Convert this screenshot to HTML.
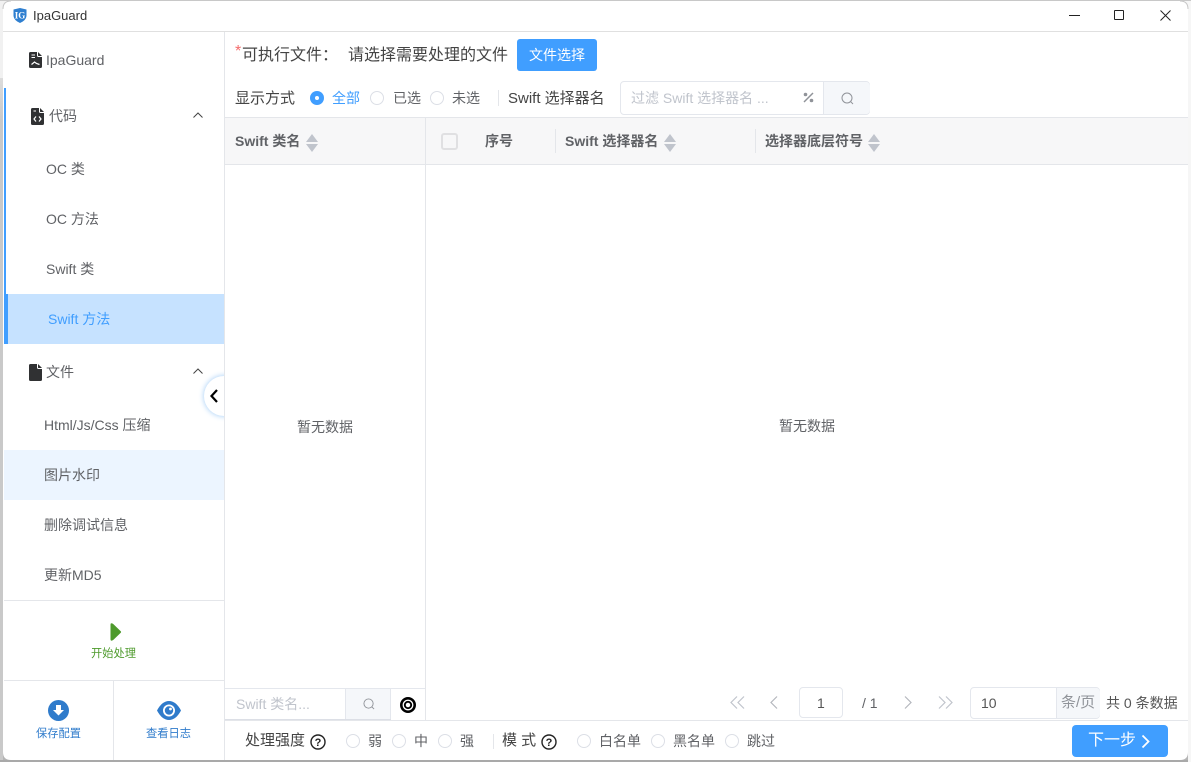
<!DOCTYPE html>
<html lang="zh">
<head>
<meta charset="utf-8">
<title>IpaGuard</title>
<style>
html,body{margin:0;padding:0;width:1191px;height:762px;overflow:hidden;background:#fff}
body{position:relative;font-family:"Liberation Sans","Noto Sans CJK SC",sans-serif;font-size:14px;color:#606266}
.a{position:absolute}
.t{position:absolute;white-space:nowrap;line-height:20px}
.ln{position:absolute;background:#e4e6ea}
.radio{position:absolute;width:12px;height:12px;border:1px solid #dcdfe6;border-radius:50%;background:#fff}
.th{font-weight:bold;color:#606266;font-size:14px}
svg{position:absolute;overflow:visible}
</style>
</head>
<body>
<!-- window frame -->
<div class="a" style="left:0;top:0;width:3px;height:762px;background:linear-gradient(#f1f1f1 0,#f1f1f1 78px,#dcdcdc 78px,#c9c9c9 120px,#c9c9c9 100%)"></div>
<div class="a" style="left:0;top:760px;width:1191px;height:2px;background:#a9a9a9"></div>
<div class="a" style="left:1188px;top:0;width:3px;height:762px;background:#f6f6f6"></div>
<div class="a" style="left:0;top:0;width:1191px;height:1px;background:#c8c8c8"></div>

<!-- title bar -->
<svg style="left:13px;top:8px" width="14" height="15" viewBox="0 0 14 15"><path d="M0.5 1.5 L7 0 L13.5 1.5 V8 Q13 12.5 7 15 Q1 12.5 0.5 8Z" fill="#2f7fd0"/><text x="7" y="10.5" font-size="9" font-weight="bold" fill="#fff" text-anchor="middle" font-family="Liberation Serif">IG</text></svg>
<div class="t" style="left:33px;top:6px;font-size:13px;color:#333;line-height:19px">IpaGuard</div>
<div class="ln" style="left:3px;top:31px;width:1185px;height:1px;background:#e0e0e0"></div>
<div class="a" style="left:1069px;top:15px;width:11px;height:1px;background:#222"></div>
<div class="a" style="left:1114px;top:10px;width:8px;height:8px;border:1.2px solid #222;border-radius:1px"></div>
<svg style="left:1160px;top:10px" width="11" height="11" viewBox="0 0 11 11"><path d="M0.5 0.5 L10.5 10.5 M10.5 0.5 L0.5 10.5" stroke="#222" stroke-width="1" fill="none"/></svg>

<!-- sidebar -->
<div class="ln" style="left:224px;top:32px;width:1px;height:728px"></div>
<div class="a" style="left:4px;top:88px;width:2px;height:206px;background:#409eff"></div>
<div class="a" style="left:4px;top:294px;width:220px;height:50px;background:#c6e2ff"></div>
<div class="a" style="left:4px;top:294px;width:4px;height:50px;background:#409eff"></div>
<div class="a" style="left:4px;top:450px;width:220px;height:50px;background:#ecf5ff"></div>

<svg style="left:29px;top:52px" width="13" height="16" viewBox="0 0 13 16"><path d="M1.5 0 H8 V3.5 Q8 5 9.5 5 H13 V14.5 Q13 16 11.5 16 H1.5 Q0 16 0 14.5 V1.5 Q0 0 1.5 0Z M9 0 L13 4 H9.5 Q9 4 9 3.5Z" fill="#303133"/><path d="M2.5 3 H6 M2.5 5.5 H6" stroke="#fff" stroke-width="1"/><path d="M2.5 12.5 L5.5 10 L7.5 11.5 L10.5 12.5" stroke="#fff" stroke-width="1.2" fill="none"/></svg>
<div class="t" style="left:46px;top:50px">IpaGuard</div>

<svg style="left:31px;top:108px" width="13" height="17" viewBox="0 0 13 17"><path d="M1.5 0 H8 V3.5 Q8 5 9.5 5 H13 V15.5 Q13 17 11.5 17 H1.5 Q0 17 0 15.5 V1.5 Q0 0 1.5 0Z M9 0 L13 4 H9.5 Q9 4 9 3.5Z" fill="#303133"/><path d="M5 8.5 L3 11 L5 13.5 M8 8.5 L10 11 L8 13.5" stroke="#fff" stroke-width="1.2" fill="none"/><path d="M2.5 3 H5" stroke="#fff" stroke-width="1"/></svg>
<div class="t" style="left:49px;top:106px">代码</div>
<svg style="left:193px;top:112px" width="10" height="6" viewBox="0 0 10 6"><path d="M0.5 5.5 L5 1 L9.5 5.5" stroke="#444" stroke-width="1" fill="none"/></svg>

<div class="t" style="left:46px;top:159px">OC 类</div>
<div class="t" style="left:46px;top:209px">OC 方法</div>
<div class="t" style="left:46px;top:259px">Swift 类</div>
<div class="t" style="left:48px;top:309px;color:#409eff">Swift 方法</div>

<svg style="left:29px;top:364px" width="13" height="17" viewBox="0 0 13 17"><path d="M1.5 0 H8 V3.5 Q8 5 9.5 5 H13 V15.5 Q13 17 11.5 17 H1.5 Q0 17 0 15.5 V1.5 Q0 0 1.5 0Z M9 0 L13 4 H9.5 Q9 4 9 3.5Z" fill="#303133"/></svg>
<div class="t" style="left:46px;top:362px">文件</div>
<svg style="left:193px;top:368px" width="10" height="6" viewBox="0 0 10 6"><path d="M0.5 5.5 L5 1 L9.5 5.5" stroke="#444" stroke-width="1" fill="none"/></svg>

<div class="t" style="left:44px;top:415px">Html/Js/Css 压缩</div>
<div class="t" style="left:44px;top:465px">图片水印</div>
<div class="t" style="left:44px;top:515px">删除调试信息</div>
<div class="t" style="left:44px;top:565px">更新MD5</div>

<!-- collapse button -->
<div class="a" style="left:194px;top:366px;width:30px;height:60px;overflow:hidden"><div class="a" style="left:10px;top:10px;width:40px;height:40px;border-radius:50%;background:#fff;box-shadow:0 0 6px #9cc9f5"></div></div>
<svg style="left:210px;top:389px" width="8" height="14" viewBox="0 0 8 14"><path d="M7 1 L1.5 7 L7 13" stroke="#000" stroke-width="2.2" fill="none"/></svg>

<div class="ln" style="left:4px;top:600px;width:220px;height:1px"></div>
<svg style="left:110px;top:623px" width="12" height="18" viewBox="0 0 12 18"><path d="M1.5 0.3 Q0.5 0.3 0.5 1.5 V16.5 Q0.5 17.7 1.5 17.7 Q2.5 17.7 3.5 16.8 L10.5 10 Q11.7 9 10.5 8 L3.5 1.2 Q2.5 0.3 1.5 0.3Z" fill="#4e9a2c"/></svg>
<div class="t" style="left:91px;top:644px;font-size:11.25px;color:#4e9a2c">开始处理</div>

<div class="ln" style="left:4px;top:680px;width:220px;height:1px"></div>
<div class="ln" style="left:113px;top:681px;width:1px;height:79px"></div>
<svg style="left:48px;top:700px" width="21" height="21" viewBox="0 0 21 21"><circle cx="10.5" cy="10.5" r="10.5" fill="#2f7bcb"/><path d="M8 5 H13 V10 H16 L10.5 15.5 L5 10 H8Z" fill="#fff"/></svg>
<div class="t" style="left:36px;top:724px;font-size:11.25px;color:#2f7bcb">保存配置</div>
<svg style="left:157px;top:701px" width="24" height="19" viewBox="0 0 24 19"><path d="M0 9.5 Q5 0 12 0 Q19 0 24 9.5 Q19 19 12 19 Q5 19 0 9.5Z" fill="#2f7bcb"/><circle cx="12" cy="9.5" r="6" fill="#fff"/><circle cx="12" cy="9.5" r="4.2" fill="#2f7bcb"/><circle cx="13.5" cy="8" r="1.4" fill="#fff"/></svg>
<div class="t" style="left:146px;top:724px;font-size:11.25px;color:#2f7bcb">查看日志</div>

<!-- top row -->
<div class="t" style="left:235px;top:44px;color:#f56c6c;font-size:16px;line-height:16px">*</div>
<div class="t" style="left:242px;top:46px;color:#444;font-size:16px">可执行文件：</div>
<div class="t" style="left:348px;top:46px;color:#444;font-size:16px">请选择需要处理的文件</div>
<div class="a" style="left:517px;top:39px;width:80px;height:32px;background:#409eff;border-radius:3px"></div>
<div class="t" style="left:529px;top:45px;color:#fff;font-size:14px">文件选择</div>

<!-- filter row -->
<div class="t" style="left:235px;top:89px;color:#444;font-size:15px">显示方式</div>
<div class="a" style="left:310px;top:91px;width:14px;height:14px;border-radius:50%;background:#409eff"></div>
<div class="a" style="left:315px;top:96px;width:4px;height:4px;border-radius:50%;background:#fff"></div>
<div class="t" style="left:332px;top:88px;color:#409eff">全部</div>
<div class="radio" style="left:370px;top:91px"></div>
<div class="t" style="left:393px;top:88px">已选</div>
<div class="radio" style="left:430px;top:91px"></div>
<div class="t" style="left:452px;top:88px">未选</div>
<div class="ln" style="left:498px;top:90px;width:1px;height:16px"></div>
<div class="t" style="left:508px;top:89px;color:#444;font-size:15px">Swift 选择器名</div>

<div class="a" style="left:620px;top:81px;width:248px;height:32px;border:1px solid #e4e7ed;border-radius:4px;background:#fff"></div>
<div class="a" style="left:823px;top:82px;width:46px;height:32px;background:#f5f7fa;border-left:1px solid #e4e7ed;border-radius:0 4px 4px 0"></div>
<div class="t" style="left:631px;top:88px;color:#c0c4cc">过滤 Swift 选择器名 ...</div>
<svg style="left:803px;top:92px" width="11" height="11" viewBox="0 0 11 11"><path d="M1 10 L10 1" stroke="#909399" stroke-width="1.5"/><circle cx="2.5" cy="2.5" r="1.8" fill="#909399"/><circle cx="8.5" cy="8.5" r="1.8" fill="#909399"/></svg>
<svg style="left:841px;top:92px" width="13" height="13" viewBox="0 0 13 13"><circle cx="6" cy="6" r="5" stroke="#909399" stroke-width="1" fill="none"/><path d="M9.7 9.7 L12 12" stroke="#909399" stroke-width="1"/></svg>

<!-- table header -->
<div class="a" style="left:225px;top:118px;width:963px;height:46px;background:#f7f7f8"></div>
<div class="ln" style="left:225px;top:117px;width:963px;height:1px"></div>
<div class="ln" style="left:225px;top:164px;width:963px;height:1px"></div>
<div class="ln" style="left:425px;top:118px;width:1px;height:602px"></div>

<div class="t th" style="left:235px;top:131px">Swift 类名</div>
<svg style="left:306px;top:134px" width="12" height="18" viewBox="0 0 12 18"><path d="M6 0 L12 8 H0Z M6 18 L12 10 H0Z" fill="#c0c4cc"/></svg>
<div class="a" style="left:441px;top:133px;width:13px;height:13px;border:2px solid #e0e0e2;border-radius:3px;background:#f7f7f8"></div>
<div class="t th" style="left:485px;top:131px">序号</div>
<div class="ln" style="left:555px;top:129px;width:1px;height:24px"></div>
<div class="t th" style="left:565px;top:131px">Swift 选择器名</div>
<svg style="left:664px;top:134px" width="12" height="18" viewBox="0 0 12 18"><path d="M6 0 L12 8 H0Z M6 18 L12 10 H0Z" fill="#c0c4cc"/></svg>
<div class="ln" style="left:755px;top:129px;width:1px;height:24px"></div>
<div class="t th" style="left:765px;top:131px">选择器底层符号</div>
<svg style="left:868px;top:134px" width="12" height="18" viewBox="0 0 12 18"><path d="M6 0 L12 8 H0Z M6 18 L12 10 H0Z" fill="#c0c4cc"/></svg>

<div class="t" style="left:297px;top:417px;font-size:14px">暂无数据</div>
<div class="t" style="left:779px;top:416px;font-size:14px">暂无数据</div>

<!-- left search -->
<div class="a" style="left:225px;top:688px;width:200px;height:32px;border-top:1px solid #e4e7ed;box-sizing:border-box"></div>
<div class="a" style="left:225px;top:719px;width:166px;height:1px;background:#dcdfe6"></div>
<div class="a" style="left:345px;top:689px;width:46px;height:30px;background:#f5f7fa;border-left:1px solid #e4e7ed;border-right:1px solid #e4e7ed;box-sizing:border-box"></div>
<div class="t" style="left:236px;top:694px;color:#c0c4cc">Swift 类名...</div>
<svg style="left:363px;top:698px" width="12" height="12" viewBox="0 0 13 13"><circle cx="6" cy="6" r="5" stroke="#909399" stroke-width="1" fill="none"/><path d="M9.7 9.7 L12 12" stroke="#909399" stroke-width="1"/></svg>
<svg style="left:400px;top:697px" width="16" height="16" viewBox="0 0 16 16"><circle cx="8" cy="8" r="6.7" stroke="#000" stroke-width="2.6" fill="none"/><circle cx="8" cy="8" r="3.2" stroke="#000" stroke-width="1.9" fill="none"/></svg>

<!-- pagination -->
<svg style="left:730px;top:696px" width="15" height="13" viewBox="0 0 15 13"><path d="M7 0.5 L1 6.5 L7 12.5 M14 0.5 L8 6.5 L14 12.5" stroke="#c0c4cc" stroke-width="1.2" fill="none"/></svg>
<svg style="left:770px;top:696px" width="8" height="13" viewBox="0 0 8 13"><path d="M7 0.5 L1 6.5 L7 12.5" stroke="#b4b7bd" stroke-width="1.2" fill="none"/></svg>
<div class="a" style="left:799px;top:687px;width:42px;height:29px;border:1px solid #e4e7ed;border-radius:4px"></div>
<div class="t" style="left:817px;top:693px;color:#555">1</div>
<div class="t" style="left:862px;top:693px">/ 1</div>
<svg style="left:904px;top:696px" width="8" height="13" viewBox="0 0 8 13"><path d="M1 0.5 L7 6.5 L1 12.5" stroke="#b4b7bd" stroke-width="1.2" fill="none"/></svg>
<svg style="left:938px;top:696px" width="15" height="13" viewBox="0 0 15 13"><path d="M1 0.5 L7 6.5 L1 12.5 M8 0.5 L14 6.5 L8 12.5" stroke="#c0c4cc" stroke-width="1.2" fill="none"/></svg>
<div class="a" style="left:970px;top:687px;width:128px;height:30px;border:1px solid #e4e7ed;border-radius:4px"></div>
<div class="a" style="left:1056px;top:688px;width:43px;height:30px;background:#f5f7fa;border-left:1px solid #e4e7ed;border-radius:0 4px 4px 0"></div>
<div class="t" style="left:981px;top:693px;color:#555">10</div>
<div class="t" style="left:1061px;top:693px;color:#909399;font-size:15px">条/页</div>
<div class="t" style="left:1106px;top:693px;color:#555;font-size:14px">共 0 条数据</div>

<!-- bottom bar -->
<div class="ln" style="left:225px;top:720px;width:963px;height:1px"></div>
<div class="t" style="left:245px;top:731px;color:#444;font-size:15px">处理强度</div>
<svg style="left:310px;top:734px" width="16" height="16" viewBox="0 0 16 16"><circle cx="8" cy="8" r="7" stroke="#222" stroke-width="1.4" fill="none"/><text x="8" y="12" font-size="11" font-weight="bold" text-anchor="middle" fill="#222" font-family="Liberation Sans">?</text></svg>
<div class="radio" style="left:346px;top:734px"></div>
<div class="t" style="left:368px;top:731px">弱</div>
<div class="radio" style="left:392px;top:734px"></div>
<div class="t" style="left:414px;top:731px">中</div>
<div class="radio" style="left:438px;top:734px"></div>
<div class="t" style="left:460px;top:731px">强</div>
<div class="ln" style="left:493px;top:734px;width:1px;height:15px"></div>
<div class="t" style="left:502px;top:731px;color:#444;font-size:15px">模 式</div>
<svg style="left:541px;top:734px" width="16" height="16" viewBox="0 0 16 16"><circle cx="8" cy="8" r="7" stroke="#222" stroke-width="1.4" fill="none"/><text x="8" y="12" font-size="11" font-weight="bold" text-anchor="middle" fill="#222" font-family="Liberation Sans">?</text></svg>
<div class="radio" style="left:577px;top:734px"></div>
<div class="t" style="left:599px;top:731px">白名单</div>
<div class="radio" style="left:651px;top:734px"></div>
<div class="t" style="left:673px;top:731px">黑名单</div>
<div class="radio" style="left:725px;top:734px"></div>
<div class="t" style="left:747px;top:731px">跳过</div>

<div class="a" style="left:1072px;top:725px;width:96px;height:32px;background:#409eff;border-radius:4px"></div>
<div class="t" style="left:1088px;top:731px;color:#fff;font-size:16px">下一步</div>
<svg style="left:1141px;top:735px" width="9" height="13" viewBox="0 0 9 13"><path d="M1.5 0.5 L7.5 6.5 L1.5 12.5" stroke="#fff" stroke-width="1.8" fill="none"/></svg>

<!-- rounded window corners -->
<svg style="left:3px;top:1px" width="8" height="8" viewBox="0 0 8 8"><path d="M0 0 H8 Q0 0 0 8Z" fill="#f1f1f1"/><path d="M8 0 Q0 0 0 8" stroke="#c8c8c8" stroke-width="1" fill="none"/></svg>
<svg style="left:1180px;top:1px" width="8" height="8" viewBox="0 0 8 8"><path d="M8 0 H0 Q8 0 8 8Z" fill="#f6f6f6"/><path d="M0 0 Q8 0 8 8" stroke="#c8c8c8" stroke-width="1" fill="none"/></svg>
<svg style="left:3px;top:752px" width="8" height="8" viewBox="0 0 8 8"><path d="M0 0 V8 H8 Q0 8 0 0Z" fill="#b5b5b5"/></svg>
<svg style="left:1180px;top:752px" width="8" height="8" viewBox="0 0 8 8"><path d="M8 0 V8 H0 Q8 8 8 0Z" fill="#b5b5b5"/></svg>
</body>
</html>
